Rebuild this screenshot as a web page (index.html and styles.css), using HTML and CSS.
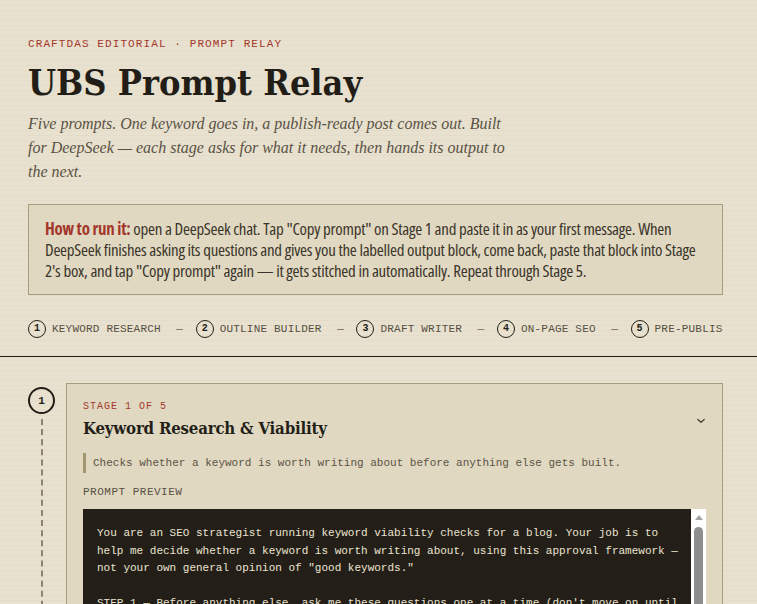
FILE: index.html
```html
<!DOCTYPE html>
<html lang="en">
<head>
<meta charset="utf-8">
<title>UBS Prompt Relay</title>
<link rel="stylesheet" href="styles.css">
</head>
<body>
<header class="hero">
  <div class="hero-inner">
    <p class="eyebrow">CRAFTDAS EDITORIAL · PROMPT RELAY</p>
    <h1 class="title">UBS Prompt Relay</h1>
    <p class="lede">Five prompts. One keyword goes in, a publish-ready post comes out. Built for DeepSeek — each stage asks for what it needs, then hands its output to the next.</p>
    <div class="howto">
      <p><strong>How to run it:</strong> open a DeepSeek chat. Tap "Copy prompt" on Stage 1 and paste it in as your first message. When DeepSeek finishes asking its questions and gives you the labelled output block, come back, paste that block into Stage 2's box, and tap "Copy prompt" again — it gets stitched in automatically. Repeat through Stage 5.</p>
    </div>
    <nav class="stepper">
      <span class="step"><span class="step-num">1</span><span class="step-label">KEYWORD RESEARCH</span></span>
      <span class="step-sep">—</span>
      <span class="step"><span class="step-num">2</span><span class="step-label">OUTLINE BUILDER</span></span>
      <span class="step-sep">—</span>
      <span class="step"><span class="step-num">3</span><span class="step-label">DRAFT WRITER</span></span>
      <span class="step-sep">—</span>
      <span class="step"><span class="step-num">4</span><span class="step-label">ON-PAGE SEO</span></span>
      <span class="step-sep">—</span>
      <span class="step"><span class="step-num">5</span><span class="step-label">PRE-PUBLISH CHECK</span></span>
    </nav>
  </div>
</header>
<main class="stages">
  <section class="stage">
    <div class="rail">
      <span class="rail-num">1</span>
      <span class="rail-line"></span>
    </div>
    <article class="card">
      <div class="card-head">
        <div>
          <p class="stage-kicker">STAGE 1 OF 5</p>
          <h2 class="stage-title">Keyword Research &amp; Viability</h2>
        </div>
        <svg class="chevron" width="10" height="6" viewBox="0 0 10 6" aria-hidden="true"><path d="M1.8 1.4 L5 4.3 L8.2 1.4" fill="none" stroke="#4a4236" stroke-width="1.3" stroke-linecap="round" stroke-linejoin="round"/></svg>
      </div>
      <p class="stage-desc">Checks whether a keyword is worth writing about before anything else gets built.</p>
      <p class="preview-label">PROMPT PREVIEW</p>
      <div class="preview">
        <pre class="preview-text">You are an SEO strategist running keyword viability checks for a blog. Your job is to
help me decide whether a keyword is worth writing about, using this approval framework —
not your own general opinion of "good keywords."

STEP 1 — Before anything else, ask me these questions one at a time (don't move on until
I've answered each one):
1. What is the seed keyword you want to check?
2. What is the site's niche, and who is the audience?
3. Roughly how many posts are already published on the site?
4. Is there a target country or language for this post?

STEP 2 — Once you have my answers, run the viability check:
- Search intent: is it informational, commercial, transactional or navigational?
- Competition: who currently ranks, and could a small site realistically compete?
- Demand: is there steady interest, or is it a one-off spike?
- Fit: does it match the site's niche and the audience I described?</pre>
        <div class="scrollbar" aria-hidden="true">
          <span class="sb-arrow"></span>
          <span class="sb-thumb"></span>
        </div>
      </div>
    </article>
  </section>
</main>
</body>
</html>
```

FILE: styles.css
```css
* { box-sizing: border-box; }

html, body {
  margin: 0;
  padding: 0;
}

body {
  background-color: #e8e1cf;
  background-image: repeating-linear-gradient(180deg, rgba(120, 100, 60, 0.035) 0 1px, transparent 1px 5px);
  color: #231f18;
  font-family: "Liberation Serif", serif;
  overflow: hidden;
}

.hero {
  border-bottom: 1.5px solid #231f18;
}

.hero-inner {
  padding: 37px 34px 0 28px;
}

.eyebrow {
  margin: 0;
  font-family: "Liberation Mono", monospace;
  font-size: 11px;
  line-height: 14px;
  letter-spacing: 1.1px;
  color: #a3372c;
}

.title {
  margin: 8px 0 0;
  font-family: "DejaVu Serif", serif;
  font-stretch: condensed;
  font-weight: 700;
  font-size: 35.8px;
  line-height: 46px;
  letter-spacing: 0;
  color: #221e17;
}

.lede {
  margin: 7px 0 0;
  max-width: 484px;
  font-family: "Liberation Serif", serif;
  font-style: italic;
  font-size: 16px;
  line-height: 24px;
  color: #5a5245;
}

.howto {
  margin-top: 20px;
  padding: 13px 16px;
  background: #e0d8c1;
  border: 1px solid #a49d7e;
}

.howto p {
  margin: 0;
  font-family: "Open Sans", "Liberation Sans", sans-serif;
  font-stretch: 78%;
  font-size: 16.9px;
  line-height: 21px;
  letter-spacing: -0.25px;
  color: #3a342a;
}

.howto strong {
  color: #a3372c;
  font-weight: 700;
}

.stepper {
  display: flex;
  align-items: center;
  white-space: nowrap;
  overflow: hidden;
  padding: 25px 0 18px;
  font-family: "Liberation Mono", monospace;
  font-size: 11px;
  line-height: 18px;
  letter-spacing: 0.2px;
  color: #574f42;
}

.step {
  display: flex;
  align-items: center;
  gap: 6px;
  flex: none;
}

.step-num {
  display: flex;
  align-items: center;
  justify-content: center;
  width: 18px;
  height: 18px;
  border: 1.3px solid #231f18;
  border-radius: 50%;
  font-weight: 700;
  font-size: 10px;
  letter-spacing: 0;
  color: #231f18;
}

.step-sep {
  flex: none;
  margin: 0 12.5px 0 15.5px;
  color: #6f6757;
}

.stages {
  padding: 26px 34px 0 28px;
}

.stage {
  display: grid;
  grid-template-columns: 27px 1fr;
  column-gap: 11px;
}

.rail {
  display: flex;
  flex-direction: column;
  align-items: center;
}

.rail-num {
  display: flex;
  align-items: center;
  justify-content: center;
  width: 27px;
  height: 27px;
  margin-top: 4px;
  border: 2px solid #231f18;
  border-radius: 50%;
  font-family: "Liberation Mono", monospace;
  font-weight: 700;
  font-size: 11px;
  color: #231f18;
}

.rail-line {
  flex: 1;
  width: 0;
  margin-top: 5px;
  border-left: 2px dashed #8c8372;
}

.card {
  background: #e0d8c1;
  border: 1px solid #a49d7e;
  padding: 17px 16px 0;
}

.card-head {
  display: flex;
  align-items: center;
  justify-content: space-between;
}

.stage-kicker {
  margin: 0;
  font-family: "Liberation Mono", monospace;
  font-size: 10px;
  line-height: 12px;
  letter-spacing: 1px;
  color: #a3372c;
}

.stage-title {
  margin: 3px 0 0;
  font-family: "DejaVu Serif", serif;
  font-stretch: condensed;
  font-weight: 700;
  font-size: 16.7px;
  line-height: 24px;
  letter-spacing: -0.2px;
  color: #231f18;
}

.chevron {
  flex: none;
  margin-right: 0;
}

.stage-desc {
  margin: 13px 0 0;
  padding: 3px 0 3px 7px;
  border-left: 3px solid #a0966f;
  font-family: "Liberation Mono", monospace;
  font-size: 11px;
  line-height: 14px;
  color: #5c5446;
}

.preview-label {
  margin: 12px 0 0;
  font-family: "Liberation Mono", monospace;
  font-size: 11px;
  line-height: 14px;
  letter-spacing: 0.5px;
  color: #585043;
}

.preview {
  display: flex;
  margin-top: 10px;
  max-height: 340px;
  overflow: hidden;
  background: #231f18;
}

.preview-text {
  flex: 1;
  min-width: 0;
  margin: 0;
  padding: 16px 13px 13px 14px;
  color: #ebe4d1;
  font-family: "Liberation Mono", monospace;
  font-size: 11px;
  line-height: 17.5px;
  white-space: pre-wrap;
}

.scrollbar {
  flex: none;
  width: 15px;
  display: flex;
  flex-direction: column;
  align-items: center;
  padding-top: 6px;
  background: #ffffff;
}

.sb-arrow {
  width: 0;
  height: 0;
  border-left: 4.5px solid transparent;
  border-right: 4.5px solid transparent;
  border-bottom: 5px solid #a3a3a3;
}

.sb-thumb {
  flex: 1;
  width: 9px;
  margin-top: 7px;
  background: #8e8e8e;
  border-radius: 4.5px 4.5px 0 0;
}
```
